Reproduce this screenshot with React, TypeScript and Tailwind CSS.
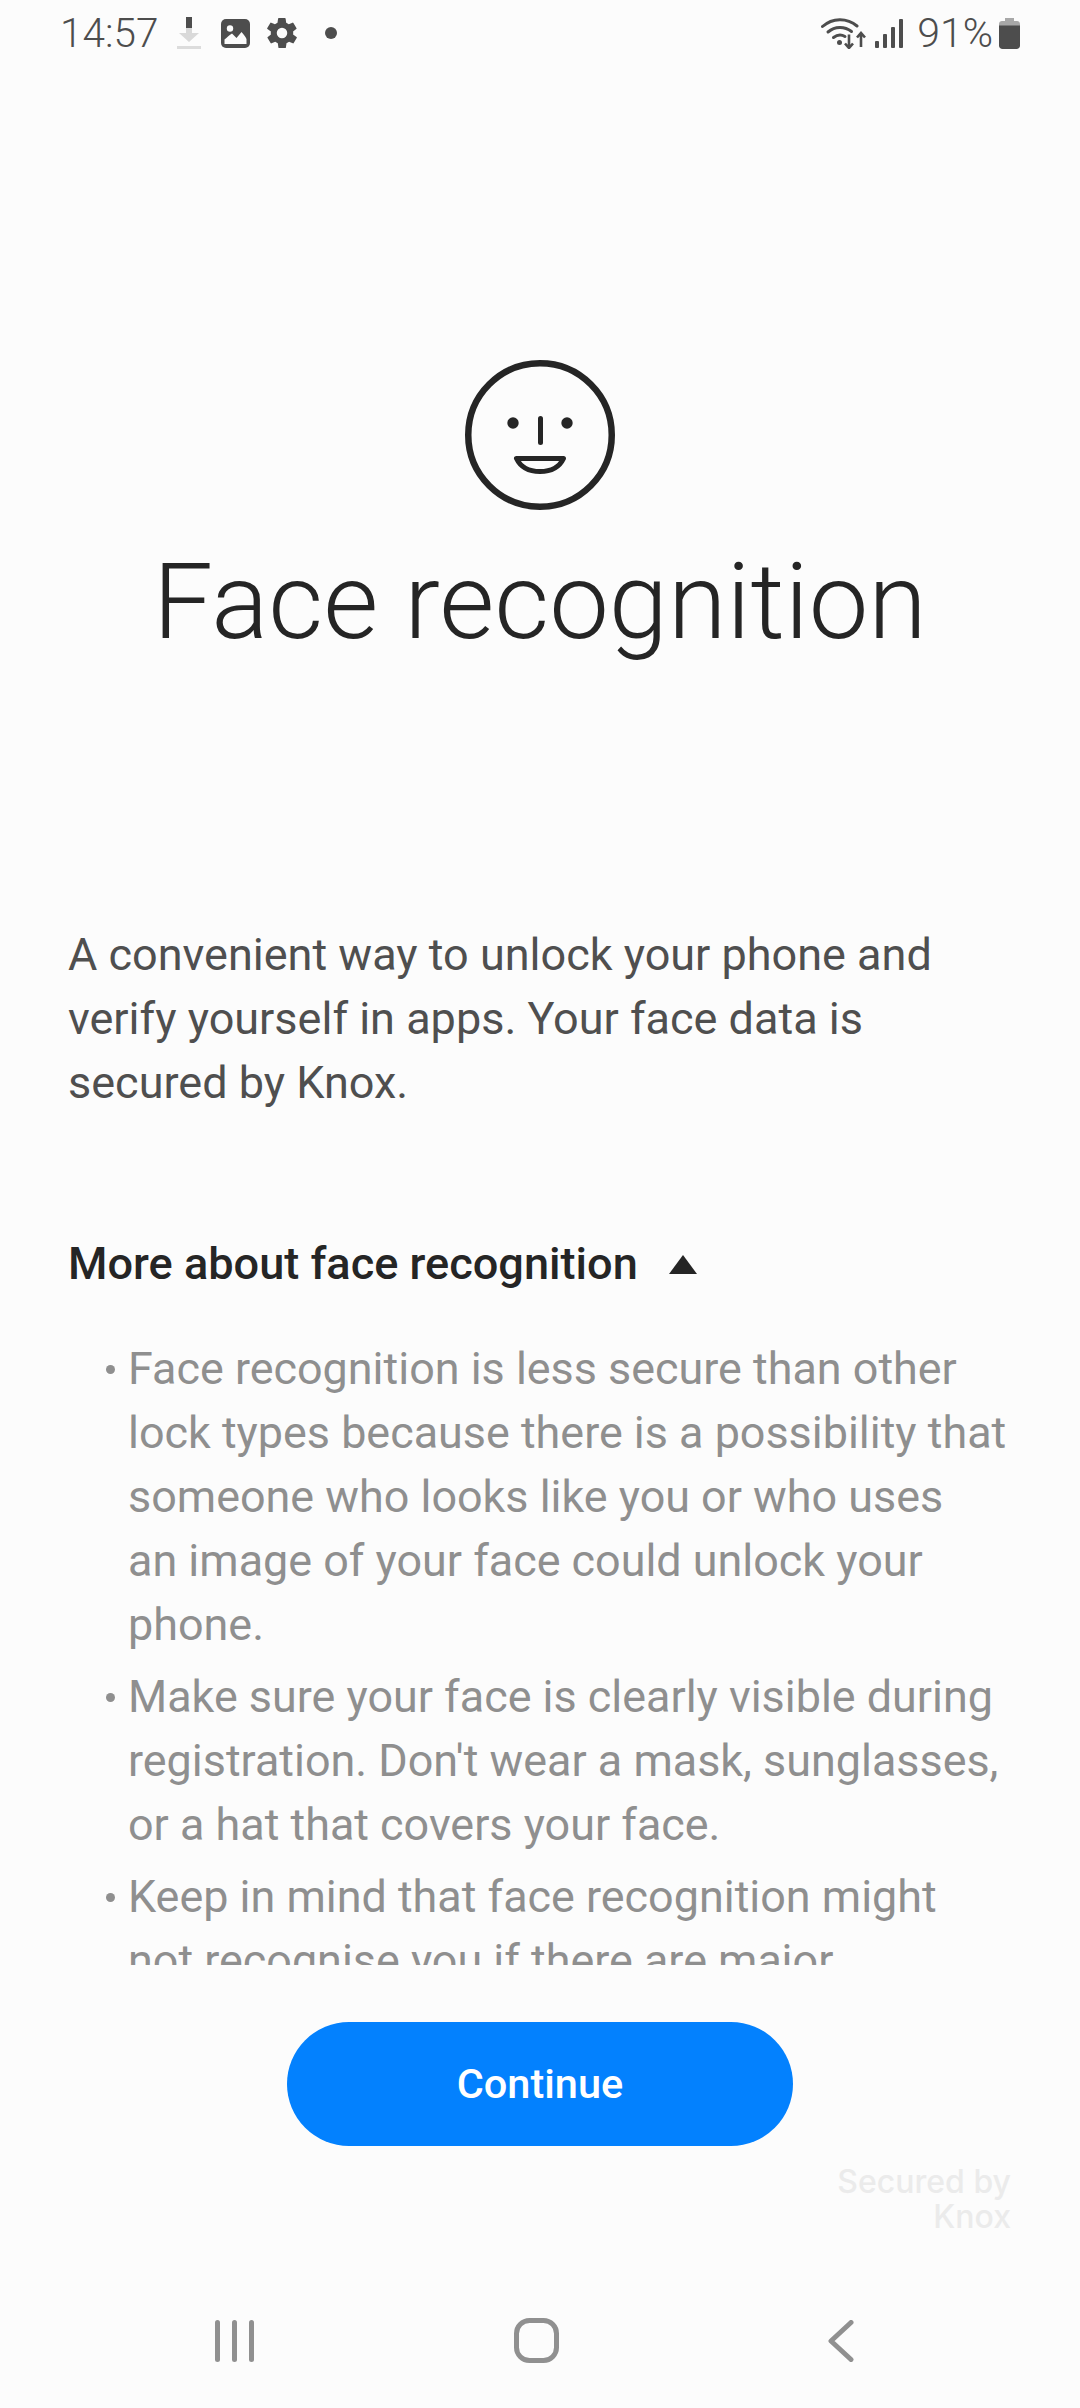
const Face = () => (
  <svg width="150" height="150" viewBox="0 0 150 150" fill="none" className="block">
    <circle cx="75" cy="75" r="71.75" stroke="#252525" strokeWidth="6.5" />
    <circle cx="48" cy="63" r="5.7" fill="#252525" />
    <circle cx="102" cy="63" r="5.7" fill="#252525" />
    <path d="M75.5 58.5V82.5" stroke="#252525" strokeWidth="5" strokeLinecap="round" />
    <path d="M51.5 98.5H98.5C94 108 85 111.5 75 111.5C65 111.5 56 108 51.5 98.5Z" stroke="#252525" strokeWidth="5" strokeLinejoin="round" />
  </svg>
);

const Download = () => (
  <svg width="24" height="32" viewBox="0 0 24 32" className="block">
    <rect x="9" y="0" width="6" height="11" fill="#4d4d4d" />
    <path d="M9 11H15V16H22L12 25L2 16H9Z" fill="#d9d9d9" />
    <rect x="0" y="29" width="24" height="3" fill="#dcdcdc" />
  </svg>
);

const Picture = () => (
  <svg width="29" height="29" viewBox="0 0 29 29" className="block">
    <rect width="29" height="29" rx="5" fill="#4d4d4d" />
    <circle cx="9" cy="9.5" r="3.2" fill="#fcfcfc" />
    <path d="M3.5 25V20.5C6 18.5 8.5 16 11 14.5L15.5 19L20.5 13C22.5 15 24.5 18 25.5 20V25Z" fill="#fcfcfc" />
  </svg>
);

const Gear = () => (
  <svg width="30" height="30" viewBox="2.2 2 19.6 20" className="block">
    <path
      fill="#4d4d4d"
      fillRule="evenodd"
      d="M19.4 13a7.6 7.6 0 0 0 0-2l2.1-1.6a.5.5 0 0 0 .1-.7l-2-3.4a.5.5 0 0 0-.6-.2l-2.5 1a7.3 7.3 0 0 0-1.7-1l-.4-2.7a.5.5 0 0 0-.5-.4h-4a.5.5 0 0 0-.5.4l-.4 2.7a7.3 7.3 0 0 0-1.7 1l-2.5-1a.5.5 0 0 0-.6.2l-2 3.4a.5.5 0 0 0 .1.7L4.6 11a7.6 7.6 0 0 0 0 2l-2.1 1.6a.5.5 0 0 0-.1.7l2 3.4c.1.2.4.3.6.2l2.5-1a7.3 7.3 0 0 0 1.7 1l.4 2.7c0 .2.2.4.5.4h4c.3 0 .5-.2.5-.4l.4-2.7a7.3 7.3 0 0 0 1.7-1l2.5 1c.2.1.5 0 .6-.2l2-3.4a.5.5 0 0 0-.1-.7ZM12 15.5a3.5 3.5 0 1 1 0-7 3.5 3.5 0 0 1 0 7Z"
    />
  </svg>
);

const Wifi = () => (
  <svg width="45" height="31" viewBox="0 0 45 31" fill="none" className="block">
    <path d="M1.5 8.5C11.5 -0.5 26 -0.5 36 8" stroke="#4d4d4d" strokeWidth="3" strokeLinecap="round" />
    <path d="M7 14C14 8 23.5 8 30.5 13.5" stroke="#4d4d4d" strokeWidth="3" strokeLinecap="round" />
    <path d="M12.5 19.5C16.5 16.5 20.5 16.5 24 18.5" stroke="#4d4d4d" strokeWidth="3" strokeLinecap="round" />
    <circle cx="18.5" cy="24.5" r="2.5" fill="#4d4d4d" />
    <path d="M28 16.5V29.5M24 25.5L28 30L32 25.5" stroke="#4d4d4d" strokeWidth="2.6" />
    <path d="M40 29V15.5M36 19.5L40 15L44 19.5" stroke="#4d4d4d" strokeWidth="2.6" />
  </svg>
);

const Signal = () => (
  <svg width="28" height="29" viewBox="0 0 28 29" className="block">
    <rect x="0" y="22" width="4" height="7" rx="1" fill="#4d4d4d" />
    <rect x="8" y="15" width="4" height="14" rx="1" fill="#4d4d4d" />
    <rect x="16" y="8" width="4" height="21" rx="1" fill="#4d4d4d" />
    <rect x="24" y="0" width="4" height="29" rx="1" fill="#4d4d4d" />
  </svg>
);

const Battery = () => (
  <svg width="21" height="31" viewBox="0 0 21 31" className="block">
    <path d="M6 0H15V3H18C19.7 3 21 4.3 21 6V8H0V6C0 4.3 1.3 3 3 3H6Z" fill="#a8a8a8" />
    <path d="M0 7.5H21V27.5C21 29.5 19.5 31 17.5 31H3.5C1.5 31 0 29.5 0 27.5Z" fill="#4d4d4d" />
  </svg>
);

const Bullet = ({ lines, className = "" }: { lines: string[]; className?: string }) => (
  <li className={`flex ${className}`}>
    <span className="w-[16px] shrink-0 flex justify-center pt-[28px]">
      <span className="block w-[9px] h-[9px] rounded-full bg-[#8f8f8f]" />
    </span>
    <span className="ml-[10px] block">
      {lines.map((l) => (
        <span key={l} className="block whitespace-nowrap">
          {l}
        </span>
      ))}
    </span>
  </li>
);

export default function App() {
  return (
    <div className="w-[1080px] h-[2408px] bg-[#fcfcfc] overflow-hidden flex flex-col font-['Roboto',sans-serif]">
      <div className="h-[66px] shrink-0 flex items-center justify-between pl-[60px] pr-[60px]">
        <div className="flex items-center">
          <span className="text-[40.5px] leading-none text-[#4d4d4d] font-light">14:57</span>
          <span className="ml-[19px]">
            <Download />
          </span>
          <span className="ml-[20px]">
            <Picture />
          </span>
          <span className="ml-[17px]">
            <Gear />
          </span>
          <span className="ml-[28px] block w-[12px] h-[12px] rounded-full bg-[#4d4d4d]" />
        </div>
        <div className="flex items-center">
          <Wifi />
          <span className="ml-[9px]">
            <Signal />
          </span>
          <span className="ml-[14px] text-[41px] leading-none text-[#4d4d4d] font-light">91%</span>
          <span className="ml-[6px]">
            <Battery />
          </span>
        </div>
      </div>

      <div className="h-[1899px] shrink-0 overflow-hidden px-[68px]">
        <div className="flex justify-center pt-[294px]">
          <Face />
        </div>
        <h1 className="mt-[29px] text-center text-[106.5px] leading-[126px] font-light text-[#252525]">
          Face recognition
        </h1>
        <p className="mt-[258px] text-[45px] leading-[64px] text-[#4f4f4f]">
          <span className="block whitespace-nowrap">A convenient way to unlock your phone and</span>
          <span className="block whitespace-nowrap">verify yourself in apps. Your face data is</span>
          <span className="block whitespace-nowrap">secured by Knox.</span>
        </p>
        <div className="mt-[117px] flex items-center">
          <span className="text-[45.1px] leading-[64px] font-medium text-[#252525]">More about face recognition</span>
          <svg width="28" height="19" viewBox="0 0 28 19" className="ml-[31px] block">
            <path d="M14 0L28 19H0Z" fill="#252525" />
          </svg>
        </div>
        <ul className="mt-[41px] ml-[34px] text-[44.9px] leading-[64px] text-[#8f8f8f]">
          <Bullet
            lines={[
              "Face recognition is less secure than other",
              "lock types because there is a possibility that",
              "someone who looks like you or who uses",
              "an image of your face could unlock your",
              "phone.",
            ]}
          />
          <Bullet
            className="mt-[8px]"
            lines={[
              "Make sure your face is clearly visible during",
              "registration. Don't wear a mask, sunglasses,",
              "or a hat that covers your face.",
            ]}
          />
          <Bullet
            className="mt-[8px]"
            lines={["Keep in mind that face recognition might", "not recognise you if there are major"]}
          />
        </ul>
      </div>

      <div className="mt-[57px] flex justify-center">
        <button className="w-[506px] h-[124px] rounded-full bg-[#0381fe] text-white text-[41.5px] font-medium">
          Continue
        </button>
      </div>
      <div className="mt-[18px] pr-[69px] text-right text-[32px] leading-[35px] font-medium text-[#ebebeb] font-['Inter',sans-serif]">
        <div>Secured by</div>
        <div>Knox</div>
      </div>

      <div className="mt-auto h-[90px] pl-[83px] flex items-start">
        <div className="w-[303px] flex justify-center pt-[2px]">
          <svg width="39" height="42" viewBox="0 0 39 42" className="block">
            <rect x="0" y="0" width="5" height="42" rx="2.5" fill="#909090" />
            <rect x="17" y="0" width="5" height="42" rx="2.5" fill="#909090" />
            <rect x="34" y="0" width="5" height="42" rx="2.5" fill="#909090" />
          </svg>
        </div>
        <div className="w-[303px] flex justify-center pr-[2px]">
          <svg width="45" height="45" viewBox="0 0 45 45" fill="none" className="block">
            <rect x="2.5" y="2.5" width="40" height="40" rx="13" stroke="#909090" strokeWidth="5" />
          </svg>
        </div>
        <div className="w-[303px] flex justify-center pt-[2px]">
          <svg width="26" height="42" viewBox="0 0 26 42" fill="none" className="block">
            <path d="M23 2.5L3 21L23 39.5" stroke="#909090" strokeWidth="5" strokeLinecap="round" strokeLinejoin="round" />
          </svg>
        </div>
      </div>
    </div>
  );
}
